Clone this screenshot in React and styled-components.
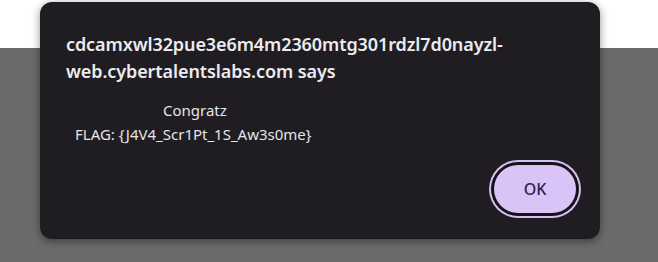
import styled, { createGlobalStyle } from "styled-components";

const Global = createGlobalStyle`
  html, body {
    margin: 0;
    padding: 0;
    background: #6b6b6b;
  }
  #root {
    height: 262px;
  }
`;

const Page = styled.div`
  position: relative;
  width: 658px;
  height: 262px;
  display: flex;
  flex-direction: column;
  overflow: hidden;
`;

const TopStrip = styled.div`
  height: 48px;
  background: #ffffff;
`;

const Backdrop = styled.div`
  flex: 1;
  background: #6b6b6b;
`;

const Dialog = styled.div`
  position: absolute;
  left: 40px;
  top: 2px;
  width: 560px;
  height: 237px;
  box-sizing: border-box;
  background: #1f1d22;
  border-radius: 12px;
  box-shadow: 0 2px 8px rgba(0, 0, 0, 0.45);
  padding: 29px 19px 0 26px;
  display: flex;
  flex-direction: column;
  font-family: "Noto Sans", "Open Sans", sans-serif;
  color: #ecebef;
`;

const Title = styled.div`
  font-size: 18px;
  font-weight: 600;
  line-height: 27px;
  letter-spacing: -0.1px;
`;

const Message = styled.div`
  margin-top: 13px;
  margin-left: 9px;
  font-size: 15px;
  line-height: 24px;
  color: #e6e4ea;
`;

const Line = styled.div`
  padding-left: ${(p) => p.indent || 0}px;
`;

const Actions = styled.div`
  margin-top: 14px;
  display: flex;
  justify-content: flex-end;
`;

const OkButton = styled.button`
  width: 82px;
  height: 48px;
  margin: 5px;
  border: none;
  border-radius: 24px;
  background: #dac4f7;
  color: #2e2250;
  font-family: "Noto Sans", "Open Sans", sans-serif;
  font-size: 16px;
  font-weight: 500;
  box-shadow: 0 0 0 3px #141316, 0 0 0 5px #d6bff5;
  cursor: pointer;
`;

export default function App() {
  return (
    <>
      <Global />
      <Page>
        <TopStrip />
        <Backdrop />
        <Dialog>
          <Title>
            cdcamxwl32pue3e6m4m2360mtg301rdzl7d0nayzl-
            <br />
            web.cybertalentslabs.com says
          </Title>
          <Message>
            <Line indent={88}>Congratz</Line>
            <Line>FLAG: {"{J4V4_Scr1Pt_1S_Aw3s0me}"}</Line>
          </Message>
          <Actions>
            <OkButton>OK</OkButton>
          </Actions>
        </Dialog>
      </Page>
    </>
  );
}
